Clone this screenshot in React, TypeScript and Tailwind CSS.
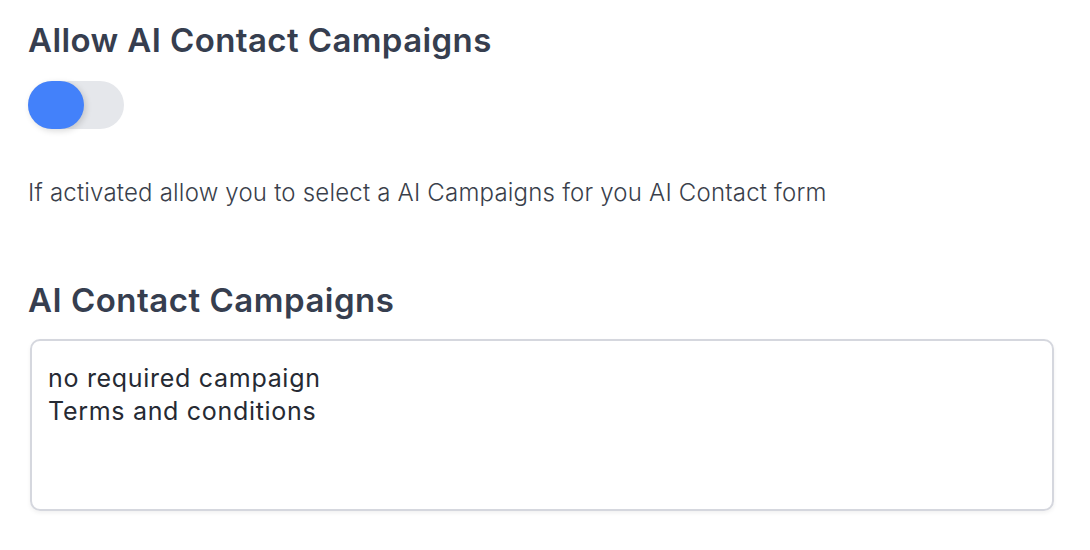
import { useState } from 'react'

export default function App() {
  const [on, setOn] = useState(false)
  return (
    <div className="min-h-screen bg-white px-[28px] pt-[20px] text-[#363e4f]" style={{ fontFamily: 'Inter, "Liberation Sans", sans-serif' }}>
      <h2 className="text-[33px] font-semibold leading-[40px] tracking-[0.4px]">Allow AI Contact Campaigns</h2>
      <button
        type="button"
        onClick={() => setOn(!on)}
        className="mt-[21px] flex h-[48px] w-[96px] items-center rounded-full bg-[#e5e7eb]"
        aria-pressed={on}
      >
        <span className="h-[48px] w-[56px] rounded-full bg-[#4381fa] shadow-[2px_2px_6px_rgba(0,0,0,0.15)]" />
      </button>
      <p className="mt-[49px] text-[24px] font-light leading-[30px] tracking-[0.2px] text-[#3a3f4b]">
        If activated allow you to select a AI Campaigns for you AI Contact form
      </p>
      <h2 className="mt-[72px] text-[33px] font-semibold leading-[40px] tracking-[0.5px]">AI Contact Campaigns</h2>
      <div className="mt-[19px] ml-[2px] mr-[8px] h-[172px] rounded-[10px] border-2 border-[#d5d7de] px-[16px] pt-[21px] text-[25px] leading-[33px] tracking-[0.7px] text-[#262a33] shadow-[0_2px_4px_rgba(0,0,0,0.06)]">
        <div>no required campaign</div>
        <div>Terms and conditions</div>
      </div>
    </div>
  )
}
